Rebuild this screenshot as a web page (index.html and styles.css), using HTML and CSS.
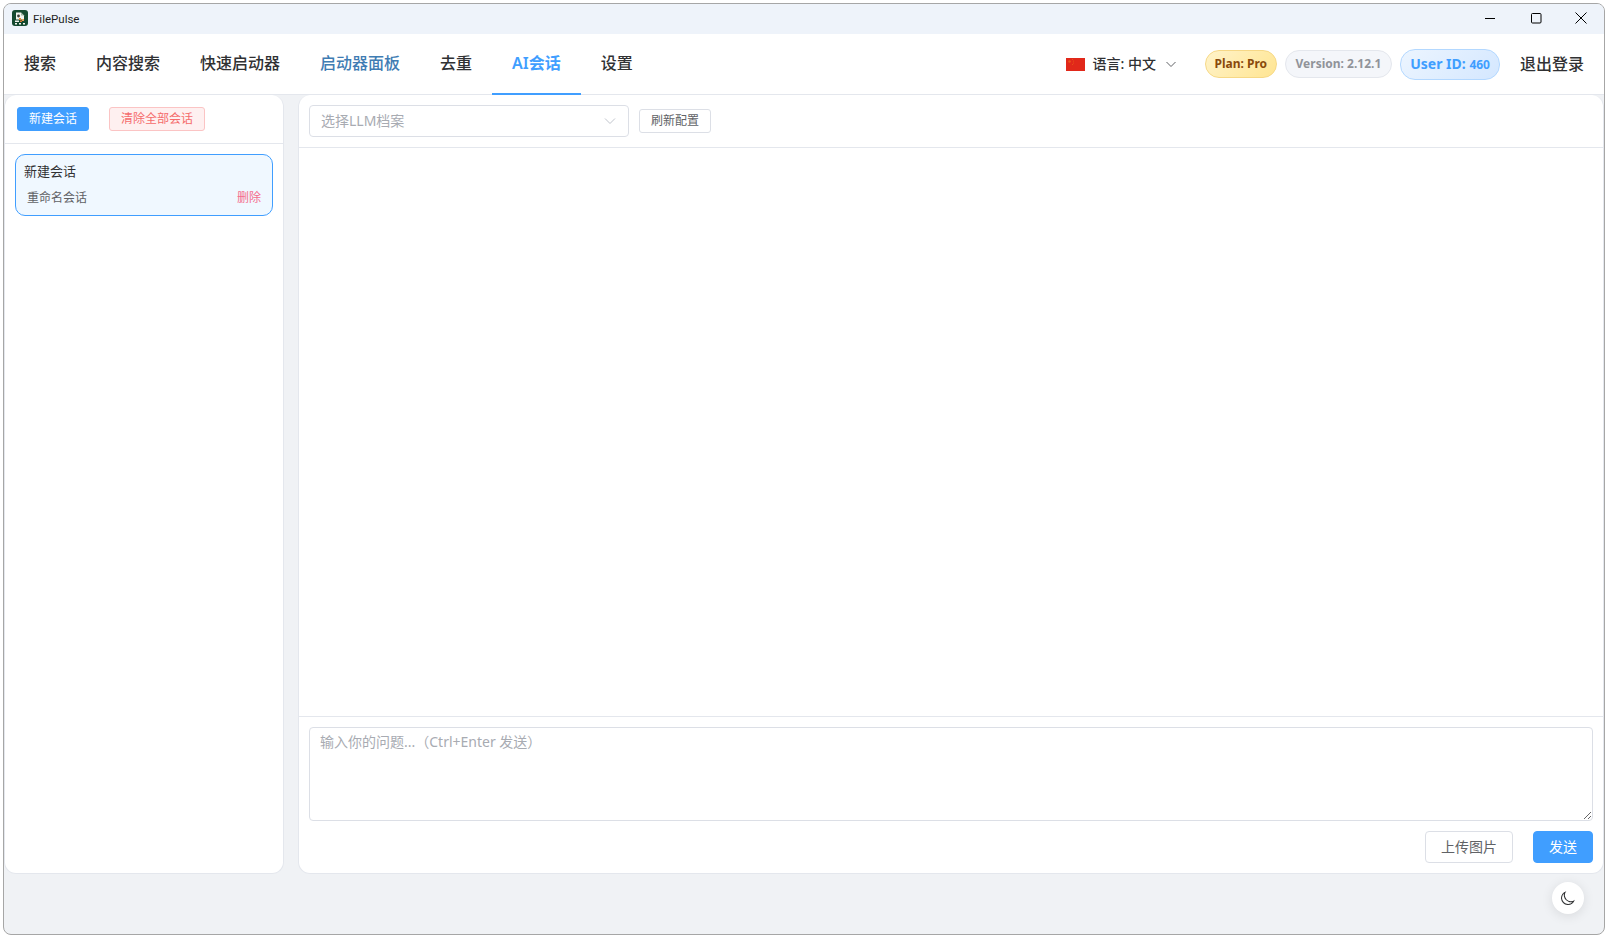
FILE: index.html
```html
<!DOCTYPE html>
<html lang="zh-CN">
<head>
    <meta charset="UTF-8">
    <meta name="viewport" content="width=device-width, initial-scale=1.0">
    <title>FilePulse</title>
    <link rel="stylesheet" href="styles.css">
</head>
<body>
    <div class="window">
        <!-- title bar -->
        <div class="titlebar">
            <svg class="app-logo" viewBox="0 0 16 16">
                <rect width="16" height="16" rx="3" fill="#14492f"/>
                <path d="M4 2.5h5l3 3v4H4z" fill="#f2f4ee"/>
                <path d="M9 2.5v3h3z" fill="#9fb7a4"/>
                <circle cx="6.5" cy="6" r="1.4" fill="#3b3f36"/>
                <rect x="7" y="8" width="2" height="2" fill="#e08a3c"/>
                <rect x="10" y="9" width="2" height="2" fill="#e8a05a"/>
                <rect x="8" y="10.5" width="2" height="1.5" fill="#d9772b"/>
                <rect x="3" y="10.5" width="4" height="1.5" fill="#f2f4ee"/>
                <rect x="3" y="13" width="2" height="1.5" fill="#f2f4ee"/>
                <rect x="7" y="13" width="2" height="1.5" fill="#f2f4ee"/>
                <rect x="11" y="13" width="2" height="1.5" fill="#f2f4ee"/>
            </svg>
            <span class="app-name">FilePulse</span>
            <div class="win-controls">
                <svg viewBox="0 0 12 12"><path d="M1 6.5h10" stroke="#000" fill="none"/></svg>
                <svg viewBox="0 0 12 12"><rect x="1.5" y="1.5" width="9.5" height="9.5" rx="1" stroke="#000" fill="none"/></svg>
                <svg viewBox="0 0 12 12"><path d="M.5.5l11 11M11.500.5l-11 11" stroke="#000" fill="none"/></svg>
            </div>
        </div>

        <!-- top nav -->
        <div class="topnav">
            <div class="tabs">
                <div class="tab">搜索</div>
                <div class="tab">内容搜索</div>
                <div class="tab">快速启动器</div>
                <div class="tab tab-hover">启动器面板</div>
                <div class="tab">去重</div>
                <div class="tab active">AI会话</div>
                <div class="tab">设置</div>
            </div>
            <div class="nav-right">
                <div class="lang">
                    <svg class="flag" viewBox="0 0 19 13">
                        <rect width="19" height="13" fill="#e1281a"/>
                        <circle cx="3.5" cy="3.5" r="1.2" fill="#ea5a18"/>
                        <circle cx="6.500" cy="1.500" r=".5" fill="#ea5a18"/>
                        <circle cx="7.500" cy="3" r=".5" fill="#ea5a18"/>
                        <circle cx="7.500" cy="5" r=".5" fill="#ea5a18"/>
                        <circle cx="6.500" cy="6.500" r=".5" fill="#ea5a18"/>
                    </svg>
                    <span class="lang-label">语言: 中文</span>
                    <svg class="lang-arrow" viewBox="0 0 12 12"><path d="M1.5 4l4.5 4.5L10.5 4" stroke="#606266" fill="none"/></svg>
                </div>
                <span class="pill pill-plan">Plan: Pro</span>
                <span class="pill pill-version">Version: 2.12.1</span>
                <span class="pill pill-user">User ID: <small>460</small></span>
                <span class="logout">退出登录</span>
            </div>
        </div>

        <div class="main">
            <!-- session list -->
            <div class="card sidebar">
                <div class="side-head">
                    <button class="btn btn-small btn-primary">新建会话</button>
                    <button class="btn btn-small btn-danger">清除全部会话</button>
                </div>
                <div class="session-list">
                    <div class="session">
                        <div class="session-title">新建会话</div>
                        <div class="session-actions">
                            <span>重命名会话</span>
                            <span class="session-del">删除</span>
                        </div>
                    </div>
                </div>
            </div>

            <!-- chat -->
            <div class="card chat">
                <div class="chat-head">
                    <div class="select">
                        <span>选择LLM档案</span>
                        <svg viewBox="0 0 12 12"><path d="M1 3.5l5 5 5-5" stroke="#c0c4cc" fill="none"/></svg>
                    </div>
                    <button class="btn btn-small">刷新配置</button>
                </div>
                <div class="messages"></div>
                <div class="composer">
                    <textarea class="question" placeholder="输入你的问题...（Ctrl+Enter 发送）"></textarea>
                    <div class="composer-btns">
                        <button class="btn">上传图片</button>
                        <button class="btn btn-primary">发送</button>
                    </div>
                </div>
            </div>
        </div>

        <!-- dark mode -->
        <div class="theme-btn">
            <svg viewBox="0 0 1024 1024"><path fill="#303133" d="M240.448 240.448a384 384 0 1 0 559.424 525.696 448 448 0 0 1-542.016-542.08 390.592 390.592 0 0 0-17.408 16.384zm181.056 362.048a384 384 0 0 0 525.632 16.384A448 448 0 1 1 405.056 76.8a384 384 0 0 0 16.448 525.696z"/></svg>
        </div>
    </div>
</body>
</html>
```

FILE: styles.css
```css
* {
    box-sizing: border-box;
}

html, body {
    height: 100%;
}

body {
    margin: 0;
    background-color: #fff;
    overflow: hidden;
    font-family: "Noto Sans", "Noto Sans CJK SC", sans-serif;
    color: #303133;
}

.window {
    position: relative;
    display: flex;
    flex-direction: column;
    height: calc(100% - 7px);
    margin: 3px 4px 4px 3px;
    border: 1px solid #a6a6a6;
    border-radius: 8px;
    background-color: #f0f2f5;
    overflow: hidden;
}

/* title bar */
.titlebar {
    display: flex;
    align-items: center;
    height: 30px;
    padding: 0 0 2px 8px;
    background-color: #eef3fa;
}

.app-logo {
    width: 16px;
    height: 16px;
}

.app-name {
    margin-left: 5px;
    padding-top: 2px;
    font-family: Roboto, sans-serif;
    font-size: 11.5px;
    color: #1f1f1f;
}

.win-controls {
    display: flex;
    gap: 33.5px;
    margin-left: auto;
    padding-right: 17px;
}

.win-controls svg {
    width: 12px;
    height: 12px;
}

/* top nav */
.topnav {
    display: flex;
    justify-content: space-between;
    height: 61px;
    background-color: #fff;
    border-bottom: 1px solid #e4e7ed;
}

.tabs {
    display: flex;
}

.tab {
    height: 61px;
    padding: 0 20px;
    line-height: 59px;
    font-size: 16px;
    font-weight: 500;
    color: #303133;
}

.tab-hover {
    color: #3f7cb3;
}

.tab.active {
    color: #409eff;
    font-weight: 600;
    border-bottom: 2px solid #409eff;
}

.nav-right {
    display: flex;
    align-items: center;
    gap: 8px;
    padding-right: 20px;
}

.lang {
    display: flex;
    align-items: center;
    margin-right: 20px;
}

.flag {
    width: 19px;
    height: 13px;
}

.lang-label {
    margin-left: 8px;
    padding-bottom: 3px;
    font-size: 14px;
    font-weight: 500;
}

.lang-arrow {
    width: 12px;
    height: 12px;
    margin-left: 9px;
}

.pill {
    height: 28px;
    padding: 0 8.5px;
    border: 1px solid;
    border-radius: 14px;
    line-height: 25px;
    font-size: 12px;
    font-weight: 700;
    white-space: nowrap;
}

.pill-plan {
    color: #8a4a0b;
    background: linear-gradient(135deg, #fff3c9, #ffe592);
    border-color: #f6d886;
}

.pill-version {
    padding: 0 10px;
    color: #909399;
    background-color: #f4f6fa;
    border-color: #e4e7ed;
}

.pill-user {
    height: 31px;
    padding: 0 9px;
    border-radius: 15px;
    line-height: 28px;
    font-size: 14px;
    color: #409eff;
    background: linear-gradient(135deg, #ecf5ff, #d4e7ff);
    border-color: #b3d8ff;
}

.pill-user small {
    font-size: 12px;
}

.logout {
    margin-left: 12px;
    padding-bottom: 3px;
    font-size: 16px;
    font-weight: 500;
}

/* main area */
.main {
    flex: 1;
    display: flex;
    gap: 14px;
    min-height: 0;
    padding-bottom: 60px;
}

.card {
    display: flex;
    flex-direction: column;
    background-color: #fff;
    border: 1px solid #e4e7ed;
    border-top: none;
    border-radius: 12px;
}

.sidebar {
    width: 280px;
}

.chat {
    flex: 1;
}

.btn {
    height: 32px;
    padding: 0 15px 2px;
    border: 1px solid #dcdfe6;
    border-radius: 4px;
    background-color: #fff;
    font-family: inherit;
    font-size: 14px;
    color: #606266;
}

.btn-small {
    height: 24px;
    padding: 0 11px 2px;
    border-radius: 3px;
    font-size: 12px;
}

.btn-primary {
    color: #fff;
    background-color: #409eff;
    border-color: #409eff;
}

.btn-danger {
    color: #f56c6c;
    background-color: #fef0f0;
    border-color: #fbc4c4;
}

.side-head {
    display: flex;
    gap: 20px;
    padding: 12px;
    border-bottom: 1px solid #e4e7ed;
}

.session-list {
    padding: 10px;
}

.session {
    height: 62px;
    padding: 6px 8px;
    border: 1px solid #409eff;
    border-radius: 10px;
    background-color: #f0f8ff;
}

.session-title {
    line-height: 21px;
    font-size: 13px;
}

.session-actions {
    display: flex;
    justify-content: space-between;
    margin-top: 7px;
    padding: 0 3px;
    line-height: 17px;
    font-size: 12px;
    color: #606266;
}

.session-del {
    color: #f56c8c;
}

.chat-head {
    display: flex;
    align-items: center;
    gap: 10px;
    height: 53px;
    padding: 0 10px;
    border-bottom: 1px solid #e4e7ed;
}

.select {
    display: flex;
    align-items: center;
    justify-content: space-between;
    width: 320px;
    height: 32px;
    padding: 0 12px 2px 11px;
    border: 1px solid #dcdfe6;
    border-radius: 4px;
    font-size: 14px;
    color: #a8abb2;
}

.select svg {
    width: 12px;
    height: 12px;
    margin-top: 2px;
}

.messages {
    flex: 1;
}

.composer {
    padding: 10px;
    border-top: 1px solid #e4e7ed;
}

.question {
    display: block;
    width: 100%;
    height: 94px;
    padding: 3px 10px;
    border: 1px solid #dcdfe6;
    border-radius: 4px;
    outline: none;
    font-family: inherit;
    font-size: 14px;
    line-height: 21px;
}

.question::placeholder {
    color: #a8abb2;
}

.composer-btns {
    display: flex;
    justify-content: flex-end;
    gap: 20px;
    margin-top: 10px;
}

.theme-btn {
    position: absolute;
    right: 20px;
    bottom: 20px;
    display: flex;
    align-items: center;
    justify-content: center;
    width: 32px;
    height: 32px;
    border-radius: 50%;
    background-color: #fff;
    box-shadow: 0 2px 12px rgba(0, 0, 0, 0.1);
}

.theme-btn svg {
    width: 16px;
    height: 16px;
}
```
